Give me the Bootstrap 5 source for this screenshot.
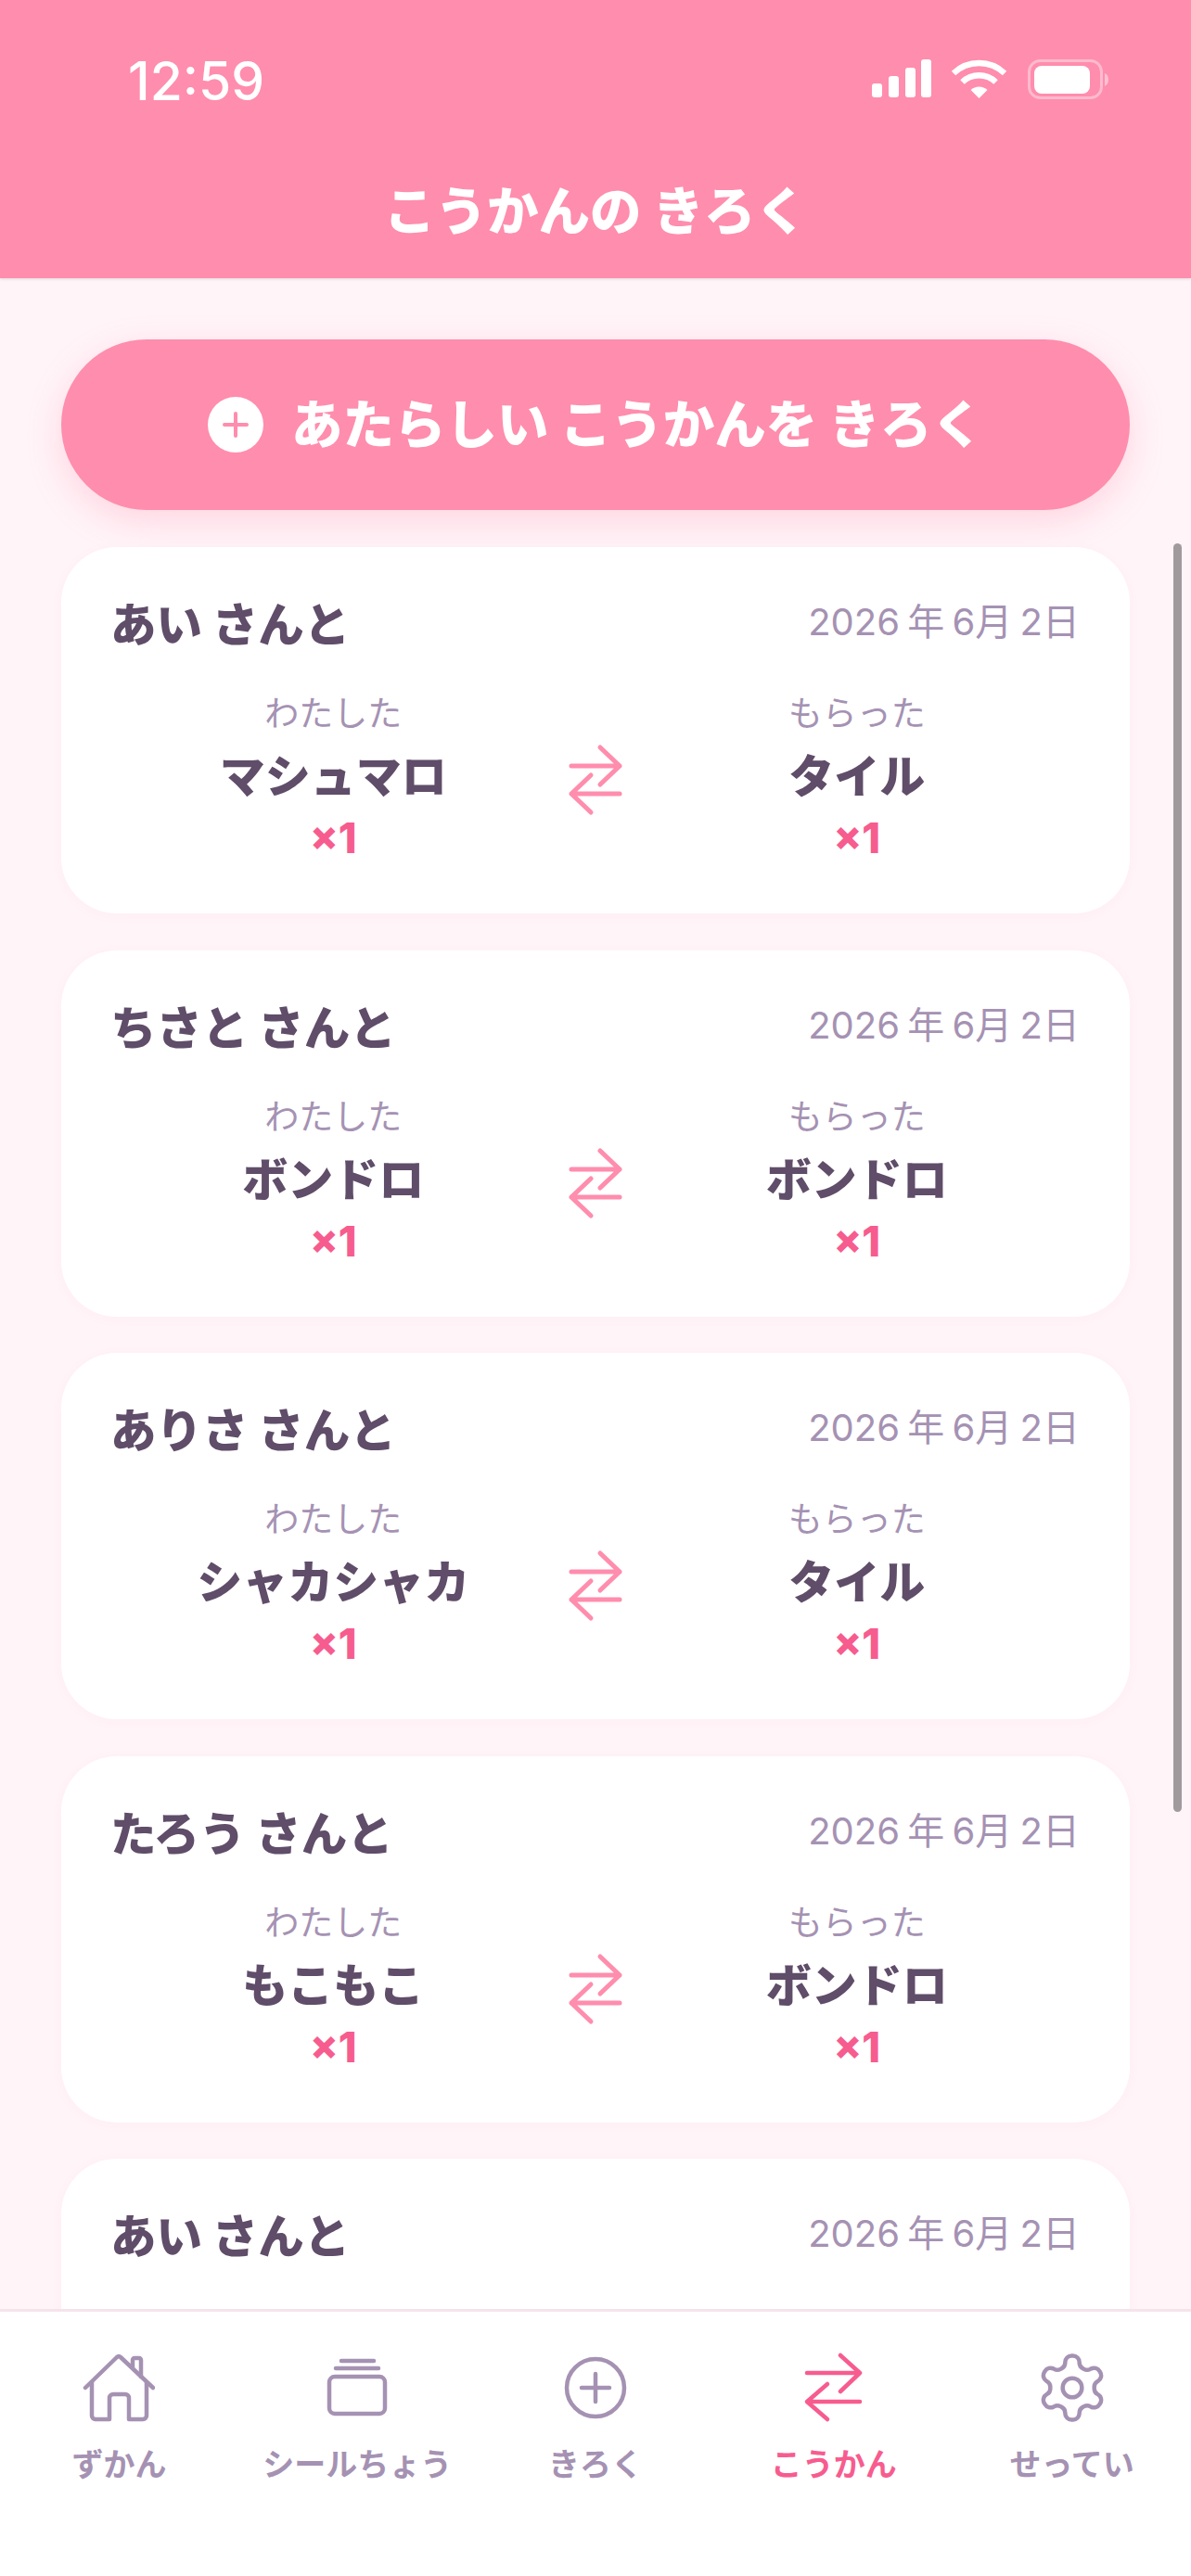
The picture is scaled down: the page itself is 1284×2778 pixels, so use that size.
<!DOCTYPE html>
<html lang="ja">
<head>
<meta charset="utf-8">
<title>こうかんの きろく</title>
<link rel="stylesheet" href="https://cdn.jsdelivr.net/npm/bootstrap@5.3.0/dist/css/bootstrap.min.css">
<style>
html,body{height:2778px;overflow:hidden}
body{font-family:Inter,"Noto Sans CJK JP",sans-serif;background:#fff4f8;color:#5f4d69}
.app-shell{height:2778px;position:relative}
.top-head{height:300px;background:#ff8dad;color:#fff;box-shadow:0 1px 3px rgba(0,0,0,.12);flex:none;z-index:2}
.status-row{height:192px;padding:64px 86px 0 138px}
.clock{font-size:57px;font-weight:500;line-height:48px}
.head-title{font-size:55.500px;font-weight:800;line-height:72px;text-align:center}
.main-area{flex:1 1 auto;min-height:0;overflow:hidden;padding:66px 66px 0}
.add-btn{height:184px;width:1152px;border:0;border-radius:92px;background:#ff8dad;color:#fff;font-size:55.500px;font-weight:800;box-shadow:0 12px 36px rgba(255,141,173,.3);gap:30px;flex:none}
.add-btn:hover,.add-btn:active{background:#ff8dad!important;color:#fff!important}
.plus-dot{width:60px;height:60px}
.trade-list{margin-top:40px;gap:39.500px}
.trade-card{height:395px;border:0;border-radius:60px;background:#fff;padding:54px 54px 0 53px;flex:none;box-shadow:0 2px 12px rgba(255,141,173,.05)}
.who{font-size:49.500px;font-weight:800;line-height:60px;color:#5f4d69}
.when{font-size:40px;line-height:54px;color:#a592b3;font-weight:400;word-spacing:-3px}
.swap-row{margin-top:43px}
.side{flex:1 1 0;text-align:center;min-width:0}
.lbl{font-size:37px;line-height:46px;color:#a592b3}
.item-name{font-size:49px;font-weight:800;line-height:64px;color:#5f4d69;margin-top:13px}
.qty{font-size:45px;font-weight:800;line-height:54px;color:#f75c8f;margin-top:7px}
.swap-ico{width:66px;height:80px;flex:none;margin:54px 9px 0;color:#ff8dad}
.scroll-thumb{position:absolute;left:1265px;top:586px;width:9px;height:1368px;border-radius:5px;background:#a19a9d}
.tabbar{height:288px;flex:none;background:#fff;border-top:3px solid #f5e3ec;z-index:2;padding-top:43px}
.tab-item{flex:1 1 0;color:#a592b3;font-size:34px;font-weight:600;line-height:40px;text-align:center}
.tab-item.is-on{color:#f75c8f}
.tab-item svg{width:78px;height:78px;display:block;margin:0 auto 24px}
</style>
</head>
<body>
<div class="app-shell d-flex flex-column">
  <header class="top-head">
    <div class="status-row d-flex justify-content-between align-items-start">
      <span class="clock">12:59</span>
      <svg width="260" height="44" viewBox="0 0 260 44" fill="#fff" aria-hidden="true">
        <rect x="2" y="26" width="11" height="15" rx="3"/><rect x="20" y="18" width="11" height="23" rx="3"/><rect x="38" y="9" width="11" height="32" rx="3"/><rect x="55" y="0" width="11" height="41" rx="3"/>
        <path d="M108.500 33a13 13 0 0 1 18 0l-9 9z"/>
        <path d="M99.500 24.500a26 26 0 0 1 36 0" fill="none" stroke="#fff" stroke-width="6.500"/>
        <path d="M90 15a40 40 0 0 1 55 0" fill="none" stroke="#fff" stroke-width="6.500"/>
        <rect x="171.500" y="1.500" width="78" height="40" rx="12" fill="none" stroke="#fff" stroke-opacity=".4" stroke-width="3"/>
        <rect x="177" y="7" width="60" height="30" rx="8"/>
        <path d="M253 15c3 1 4 4 4 7s-1 5-4 7z" fill-opacity=".45"/>
      </svg>
    </div>
    <h1 class="head-title m-0">こうかんの きろく</h1>
  </header>
  <main class="main-area d-flex flex-column">
    <button type="button" class="btn add-btn d-flex align-items-center justify-content-center">
      <svg class="plus-dot" viewBox="0 0 60 60" aria-hidden="true"><circle cx="30" cy="30" r="30" fill="#fff"/><path d="M30 18v24M18 30h24" stroke="#ff8dad" stroke-width="4" stroke-linecap="round"/></svg>
      <span>あたらしい こうかんを きろく</span>
    </button>
    <div class="trade-list d-flex flex-column">
      <div class="card trade-card">
        <div class="d-flex justify-content-between align-items-start"><span class="who">あい さんと</span><span class="when">2026 年 6月 2日</span></div>
        <div class="swap-row d-flex align-items-start"><div class="side"><div class="lbl">わたした</div><div class="item-name">マシュマロ</div><div class="qty">×1</div></div><svg class="swap-ico" viewBox="0 0 66 80" fill="none" stroke="currentColor" stroke-width="5" stroke-linecap="round" stroke-linejoin="round"><path d="M7 25h52M38 5l21 20-21 20"/><path d="M59 55H7M28 35 7 55l21 20"/></svg><div class="side"><div class="lbl">もらった</div><div class="item-name">タイル</div><div class="qty">×1</div></div></div>
      </div>
      <div class="card trade-card">
        <div class="d-flex justify-content-between align-items-start"><span class="who">ちさと さんと</span><span class="when">2026 年 6月 2日</span></div>
        <div class="swap-row d-flex align-items-start"><div class="side"><div class="lbl">わたした</div><div class="item-name">ボンドロ</div><div class="qty">×1</div></div><svg class="swap-ico" viewBox="0 0 66 80" fill="none" stroke="currentColor" stroke-width="5" stroke-linecap="round" stroke-linejoin="round"><path d="M7 25h52M38 5l21 20-21 20"/><path d="M59 55H7M28 35 7 55l21 20"/></svg><div class="side"><div class="lbl">もらった</div><div class="item-name">ボンドロ</div><div class="qty">×1</div></div></div>
      </div>
      <div class="card trade-card">
        <div class="d-flex justify-content-between align-items-start"><span class="who">ありさ さんと</span><span class="when">2026 年 6月 2日</span></div>
        <div class="swap-row d-flex align-items-start"><div class="side"><div class="lbl">わたした</div><div class="item-name">シャカシャカ</div><div class="qty">×1</div></div><svg class="swap-ico" viewBox="0 0 66 80" fill="none" stroke="currentColor" stroke-width="5" stroke-linecap="round" stroke-linejoin="round"><path d="M7 25h52M38 5l21 20-21 20"/><path d="M59 55H7M28 35 7 55l21 20"/></svg><div class="side"><div class="lbl">もらった</div><div class="item-name">タイル</div><div class="qty">×1</div></div></div>
      </div>
      <div class="card trade-card">
        <div class="d-flex justify-content-between align-items-start"><span class="who">たろう さんと</span><span class="when">2026 年 6月 2日</span></div>
        <div class="swap-row d-flex align-items-start"><div class="side"><div class="lbl">わたした</div><div class="item-name">もこもこ</div><div class="qty">×1</div></div><svg class="swap-ico" viewBox="0 0 66 80" fill="none" stroke="currentColor" stroke-width="5" stroke-linecap="round" stroke-linejoin="round"><path d="M7 25h52M38 5l21 20-21 20"/><path d="M59 55H7M28 35 7 55l21 20"/></svg><div class="side"><div class="lbl">もらった</div><div class="item-name">ボンドロ</div><div class="qty">×1</div></div></div>
      </div>
      <div class="card trade-card">
        <div class="d-flex justify-content-between align-items-start"><span class="who">あい さんと</span><span class="when">2026 年 6月 2日</span></div>
      </div>
    </div>
  </main>
  <div class="scroll-thumb"></div>
  <nav class="tabbar d-flex">
    <div class="tab-item"><svg viewBox="0 0 78 78" fill="none" stroke="currentColor" stroke-width="4.500" stroke-linecap="round" stroke-linejoin="round"><path d="M3 39 37 6a3 3 0 0 1 4 0l35 33"/><path d="M10 33v36a4 4 0 0 0 4 4h15V50a4 4 0 0 1 4-4h13a4 4 0 0 1 4 4v23h15a4 4 0 0 0 4-4V33"/><path d="M54 17V9a2 2 0 0 1 2-2h5a2 2 0 0 1 2 2v18"/></svg>ずかん</div>
    <div class="tab-item"><svg viewBox="0 0 78 78" fill="none" stroke="currentColor" stroke-width="4.500" stroke-linecap="round" stroke-linejoin="round"><rect x="9" y="27" width="60" height="40" rx="6"/><path d="M16 18h46M22 10h35"/></svg>シールちょう</div>
    <div class="tab-item"><svg viewBox="0 0 78 78" fill="none" stroke="currentColor" stroke-width="4.500" stroke-linecap="round" stroke-linejoin="round"><circle cx="39" cy="39" r="31"/><path d="M39 24v30M24 39h30"/></svg>きろく</div>
    <div class="tab-item is-on"><svg viewBox="0 0 78 78" fill="none" stroke="currentColor" stroke-width="4.500" stroke-linecap="round" stroke-linejoin="round"><path d="M10 23h57M46 4l21 19-21 20"/><path d="M67 54H10M32 35 10 54l22 19"/></svg>こうかん</div>
    <div class="tab-item"><svg viewBox="0.700 0.700 22.600 22.600" fill="none" stroke="currentColor" stroke-width="1.300" stroke-linecap="round" stroke-linejoin="round"><path d="M12.220 2h-.44a2 2 0 0 0-2 2v.18a2 2 0 0 1-1 1.730l-.43.250a2 2 0 0 1-2 0l-.15-.080a2 2 0 0 0-2.730.730l-.22.380a2 2 0 0 0 .730 2.730l.15.100a2 2 0 0 1 1 1.720v.510a2 2 0 0 1-1 1.740l-.15.090a2 2 0 0 0-.730 2.730l.22.380a2 2 0 0 0 2.730.730l.15-.080a2 2 0 0 1 2 0l.43.250a2 2 0 0 1 1 1.730V20a2 2 0 0 0 2 2h.44a2 2 0 0 0 2-2v-.18a2 2 0 0 1 1-1.730l.43-.250a2 2 0 0 1 2 0l.15.080a2 2 0 0 0 2.730-.730l.22-.390a2 2 0 0 0-.730-2.730l-.15-.080a2 2 0 0 1-1-1.740v-.500a2 2 0 0 1 1-1.740l.15-.090a2 2 0 0 0 .730-2.730l-.22-.380a2 2 0 0 0-2.730-.730l-.15.080a2 2 0 0 1-2 0l-.43-.250a2 2 0 0 1-1-1.730V4a2 2 0 0 0-2-2z"/><circle cx="12" cy="12" r="3"/></svg>せってい</div>
  </nav>
</div>
<script src="https://cdn.jsdelivr.net/npm/bootstrap@5.3.0/dist/js/bootstrap.bundle.min.js"></script>
</body>
</html>
